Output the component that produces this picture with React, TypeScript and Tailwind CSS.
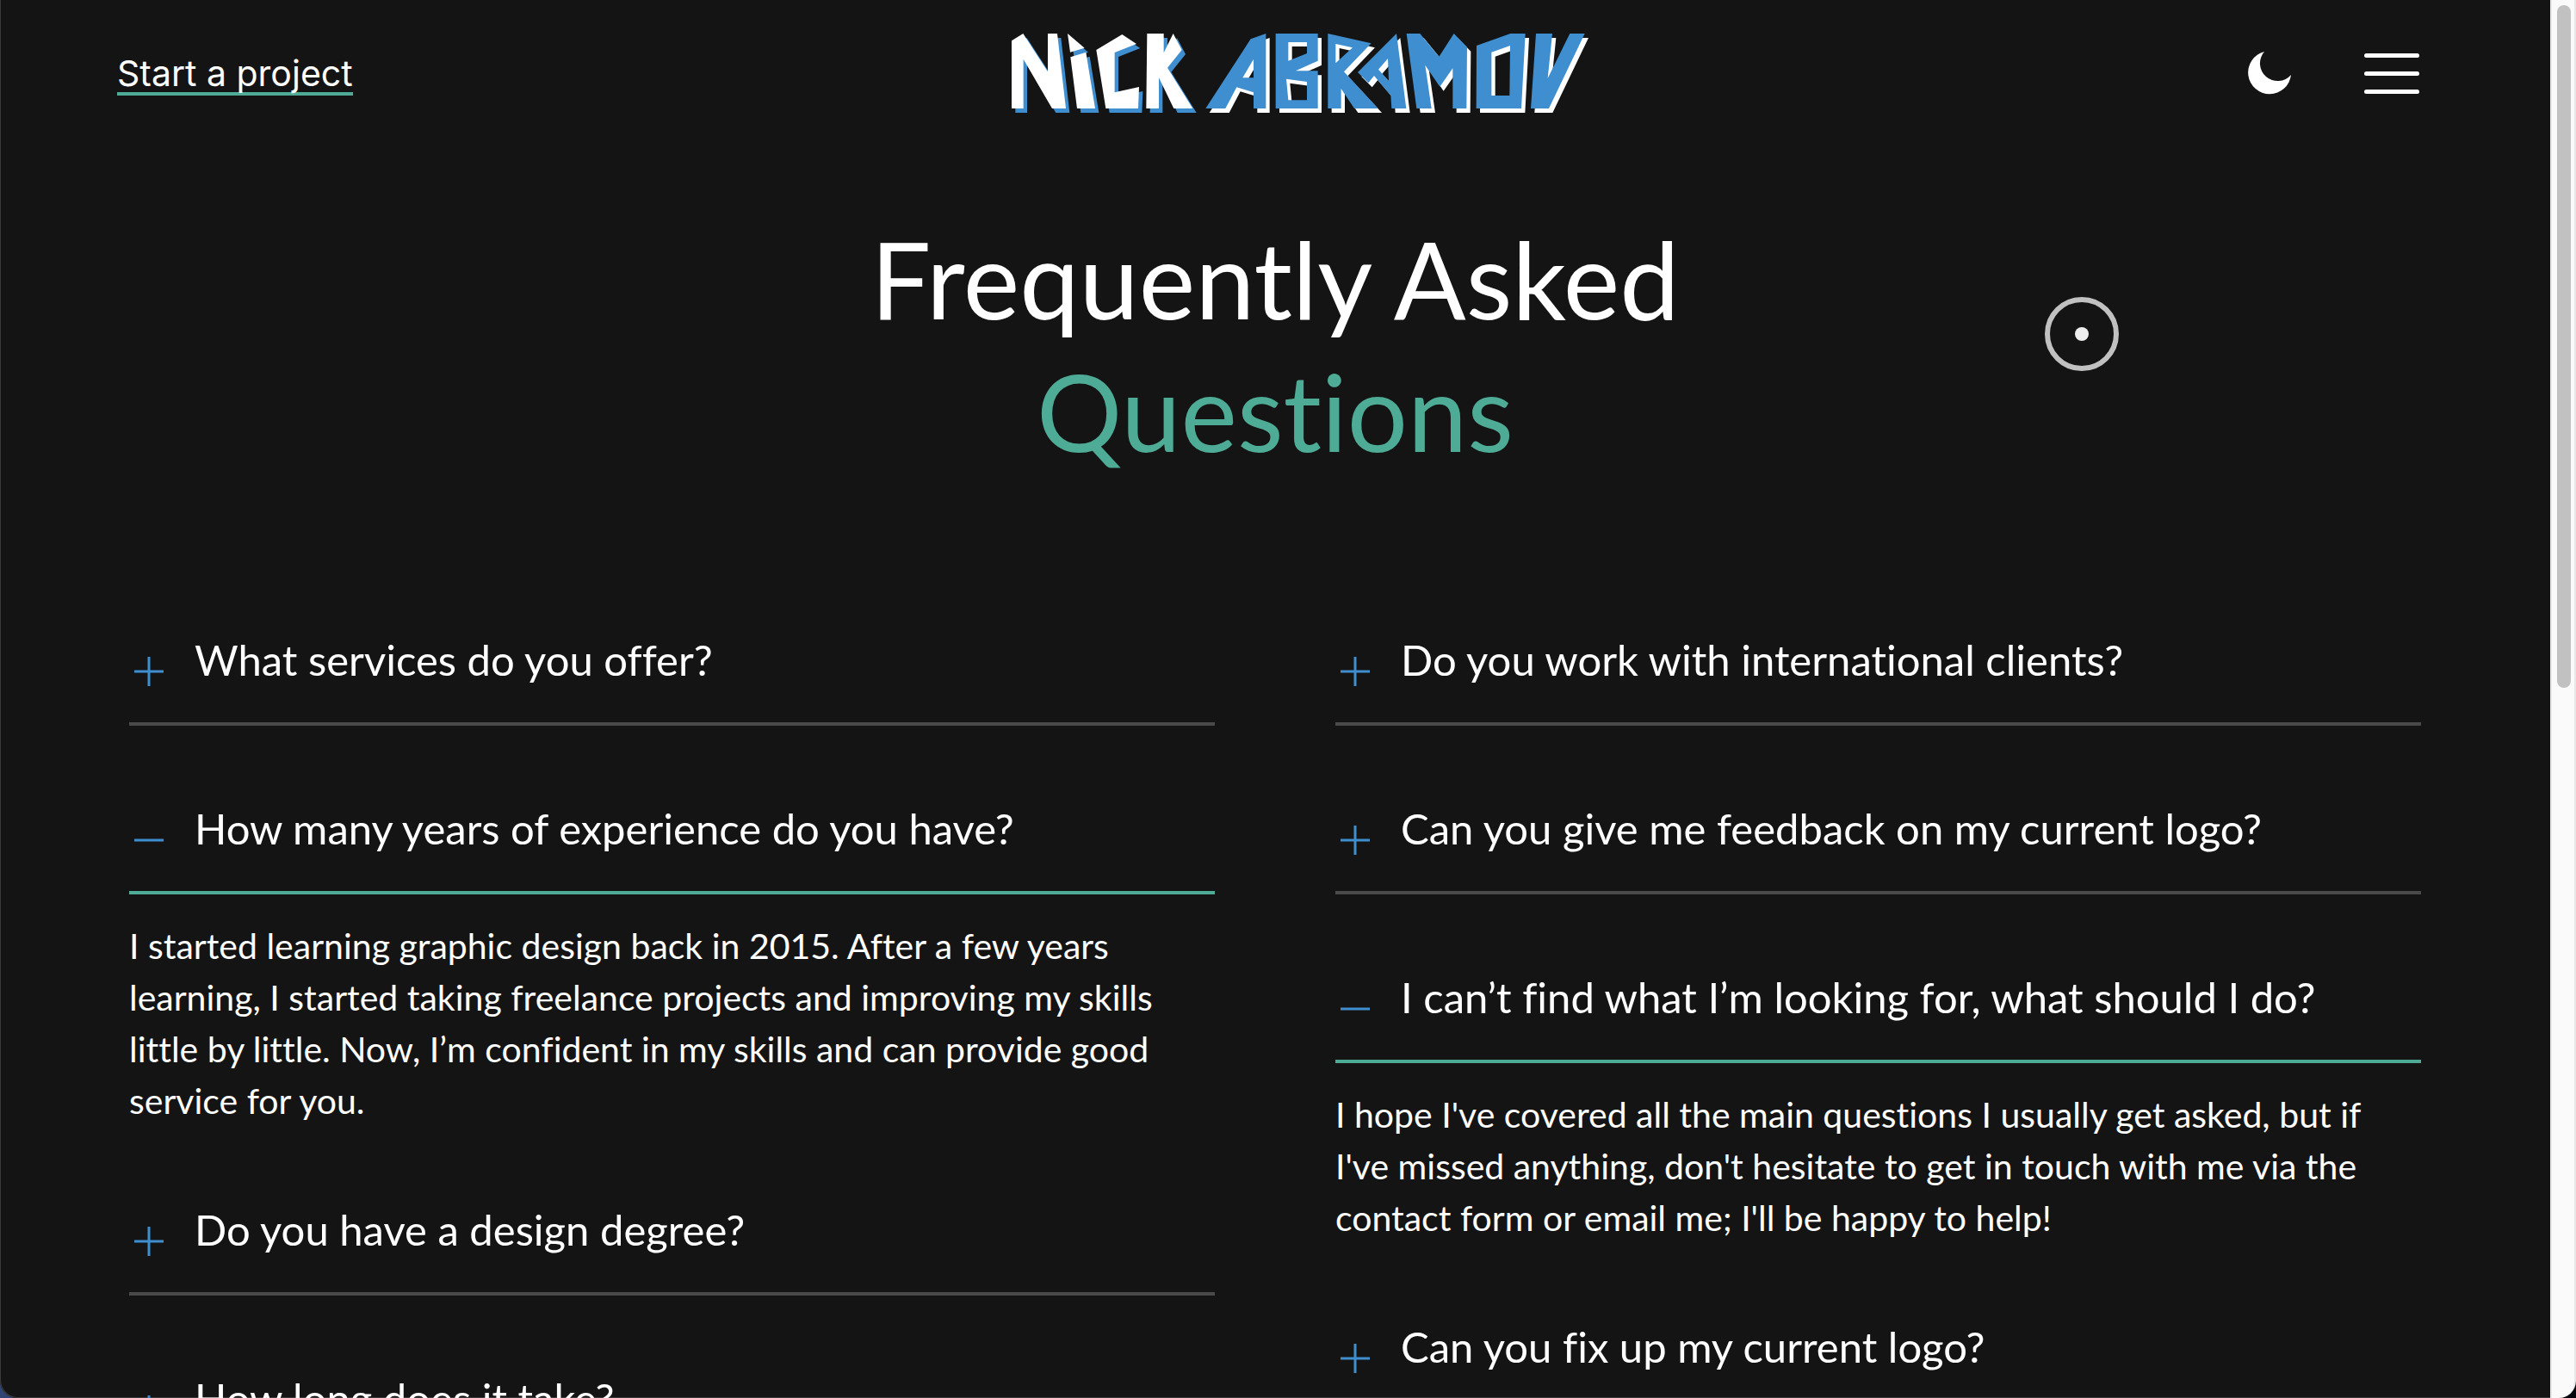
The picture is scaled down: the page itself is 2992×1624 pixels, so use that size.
import { useState } from "react";

type Faq = { question: string; answer: string; open?: boolean };

const leftFaqs: Faq[] = [
  {
    question: "What services do you offer?",
    answer: "Logo design, brand identity, illustration and print design.",
  },
  {
    question: "How many years of experience do you have?",
    answer:
      "I started learning graphic design back in 2015. After a few years learning, I started taking freelance projects and improving my skills little by little. Now, I’m confident in my skills and can provide good service for you.",
    open: true,
  },
  { question: "Do you have a design degree?", answer: "No, I am self-taught." },
  { question: "How long does it take?", answer: "It depends on the project." },
];

const rightFaqs: Faq[] = [
  { question: "Do you work with international clients?", answer: "Yes, I work with clients worldwide." },
  { question: "Can you give me feedback on my current logo?", answer: "Yes, send it to me through the contact form." },
  {
    question: "I can’t find what I’m looking for, what should I do?",
    answer:
      "I hope I've covered all the main questions I usually get asked, but if I've missed anything, don't hesitate to get in touch with me via the contact form or email me; I'll be happy to help!",
    open: true,
  },
  { question: "Can you fix up my current logo?", answer: "Yes, I offer logo refreshes." },
];

const nick =
  "M42 82L82 57L168 190V57H201L231 318H183L83 146V318H42Z M237 57L296 107L246 122Z M247 139L301 122L333 318H270Z M337 114L427 60L477 93L401 123V262L486 243L483 318H370Z M514 57H572V124L605 57L635 114L585 176L673 318H607L555 211V318H511Z";

const abramov =
  "M155 76L208 57V318H165V262L106 244L67 318H-2Z M165 146L127 211H165Z " +
  "M242 57H389V152L312 187H389V318H242Z M286 87H351V126L286 152Z M279 215L351 225V289H286Z " +
  "M424 57L575 91L480 190L599 318H516L470 249V318H424Z M451 93L510 106L451 160Z " +
  "M663 57L697 318H646L643 272L585 204L565 229L528 192Z M633 144L636 222L600 182Z " +
  "M698 57H745L811 138L863 57L909 104L907 318H859V178L814 242L763 167L785 318H733Z " +
  "M942 99L1060 57H1112L1098 318H941Z M994 122L1059 99L1057 273H994Z " +
  "M1149 57H1206L1190 213L1267 57H1319L1194 318H1131Z";

function Logo() {
  return (
    <svg viewBox="42 57 2010 276" className="h-[92px] w-[670px]" role="img" aria-label="Nick Abramov" fillRule="evenodd">
      <path d={nick} fill="#3e8ed0" transform="translate(13 15)" />
      <path d={nick} fill="#fff" />
      <path d={abramov} fill="#fff" transform="translate(733 15)" />
      <path d={abramov} fill="#3e8ed0" transform="translate(720 0)" />
    </svg>
  );
}

function Header() {
  return (
    <header className="flex items-center justify-between pt-[39px] pr-[152px] pl-[136px]">
      <a href="#contact" className="border-b-4 border-[#4eac96] pt-1 font-['Inter',sans-serif] text-[41px] leading-[44px]">
        Start a project
      </a>
      <a href="#home">
        <Logo />
      </a>
      <div className="flex items-center gap-[85px]">
        <button type="button" aria-label="Toggle dark mode">
          <svg viewBox="0 0 50 50" className="size-[50px]" fill="#fff">
            <path d="M19 0A25 25 0 1 0 50 27A20 20 0 1 1 19 0Z" />
          </svg>
        </button>
        <button type="button" aria-label="Open menu" className="flex w-16 flex-col gap-4">
          <span className="h-[5px] rounded-full bg-white" />
          <span className="h-[5px] rounded-full bg-white" />
          <span className="h-[5px] rounded-full bg-white" />
        </button>
      </div>
    </header>
  );
}

function FaqItem({ id, faq }: { id: string; faq: Faq }) {
  const [open, setOpen] = useState(!!faq.open);
  return (
    <div>
      <h2>
        <button
          type="button"
          aria-expanded={open}
          aria-controls={id}
          onClick={() => setOpen(!open)}
          className={`flex w-full items-start border-b-4 pb-10 text-left text-[49px] leading-[54px] ${open ? "border-[#4eac96]" : "border-[#4a4a4a]"}`}
        >
          <svg viewBox="0 0 46 60" className="mr-[30px] h-[60px] w-[46px] shrink-0" stroke="#3e8ed0" strokeWidth="3" fill="none">
            <path d={open ? "M6 41H40" : "M6 41H40M23 24V58"} />
          </svg>
          {faq.question}
        </button>
      </h2>
      {open && (
        <p id={id} className="pt-[30px] text-[41px] leading-[60px]">
          {faq.answer}
        </p>
      )}
    </div>
  );
}

function FaqColumn({ name, faqs }: { name: string; faqs: Faq[] }) {
  return (
    <div className="flex min-w-0 flex-1 flex-col gap-[92px]">
      {faqs.map((faq, i) => (
        <FaqItem key={faq.question} id={`${name}-${i}`} faq={faq} />
      ))}
    </div>
  );
}

export default function App() {
  return (
    <div className="relative flex h-screen overflow-hidden bg-[#2f4472] font-['Lato',sans-serif] text-white [font-variant-ligatures:none]">
      <div className="min-w-0 flex-1 overflow-hidden rounded-bl-[20px] bg-[#141414] shadow-[inset_1px_-1px_0_#3a3a3a]">
        <Header />
        <main className="px-[150px]">
          <h1 className="pt-[115px] text-center text-[124px] leading-[154px]">
            Frequently Asked
            <br />
            <span className="text-[#4eac96]">Questions</span>
          </h1>
          <div className="flex items-start gap-[140px] pt-[185px]">
            <FaqColumn name="left" faqs={leftFaqs} />
            <FaqColumn name="right" faqs={rightFaqs} />
          </div>
        </main>
      </div>
      <div className="w-[30px] shrink-0 bg-[#04040c]">
        <div className="h-full rounded-br-[20px] border-r-2 border-l-2 border-[#e8e8e8] bg-[#fafafa] px-1.5 pt-1.5">
          <div className="h-[793px] w-4 rounded-full bg-[#c1c1c1]" />
        </div>
      </div>
      <div className="pointer-events-none absolute top-[345px] right-[531px] flex size-[86px] items-center justify-center rounded-full border-6 border-[#c1c1c1]">
        <span className="size-4 rounded-full bg-[#eeeeee]" />
      </div>
    </div>
  );
}
